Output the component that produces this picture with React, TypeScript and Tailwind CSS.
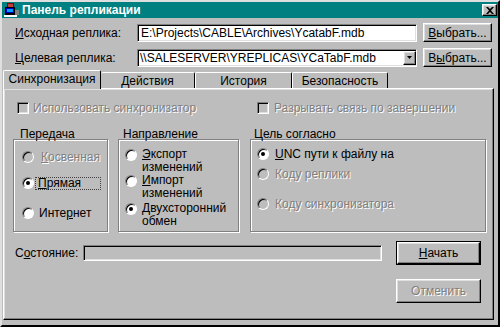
import React from 'react';

const face = 'bg-[#bdbdbd]';
const raised =
  'border border-t-white border-l-white border-r-black border-b-black shadow-[inset_-1px_-1px_#808080,inset_1px_1px_#dfdfdf]';
const sunken =
  'border border-t-[#808080] border-l-[#808080] border-r-white border-b-white shadow-[inset_1px_1px_#000,inset_-1px_-1px_#dfdfdf]';
const grayed = 'text-[#808080] [text-shadow:1px_1px_0_#fff]';
const etched = 'border border-[#808080] shadow-[1px_1px_0_#fff,inset_1px_1px_0_#fff]';

const U = ({ children }: { children: React.ReactNode }) => (
  <span className="underline underline-offset-[1px]">{children}</span>
);

function Radio({ checked = false, disabled = false }: { checked?: boolean; disabled?: boolean }) {
  return (
    <span
      className={`flex w-[12px] h-[12px] shrink-0 rounded-full border border-t-[#808080] border-l-[#808080] border-r-white border-b-white shadow-[inset_1px_1px_#000] ${
        disabled ? face : 'bg-white'
      }`}
    >
      {checked && <span className="m-auto w-[4px] h-[4px] rounded-full bg-black" />}
    </span>
  );
}

function Check() {
  return <span className={`block w-[12px] h-[12px] shrink-0 ${sunken} ${face}`} />;
}

function AppIcon() {
  return (
    <svg width="16" height="14" viewBox="0 0 16 14" className="shrink-0">
      <rect x="3" y="0" width="7" height="6" fill="#800000" />
      <rect x="4" y="1" width="5" height="4" fill="#c04040" />
      <rect x="1" y="4" width="10" height="8" fill="#000" />
      <rect x="2" y="5" width="8" height="5" fill="#0000c0" />
      <rect x="3" y="6" width="6" height="3" fill="#00a0ff" />
      <rect x="0" y="12" width="13" height="2" fill="#fff" />
      <rect x="11" y="7" width="4" height="5" fill="#808080" />
    </svg>
  );
}

export default function App() {
  return (
    <div
      className={`w-[500px] h-[327px] ${face} border-2 border-t-[#dfdfdf] border-l-[#dfdfdf] border-r-black border-b-black text-[12px] text-black font-['Liberation_Sans',Arial,sans-serif] leading-none overflow-hidden`}
    >
      {/* title */}
      <div className="h-[16px] bg-[#008080] flex items-center pl-[2px] pr-[1px]">
        <AppIcon />
        <span className="ml-[2px] text-white font-bold text-[12px]">Панель репликации</span>
        <button className={`ml-auto w-[15px] h-[12px] ${raised} ${face} flex items-center justify-center`}>
          <svg width="8" height="7" viewBox="0 0 8 7">
            <path d="M0 0h2l2 2 2-2h2L5 3.5 8 7H6L4 5 2 7H0l3-3.5z" fill="#000" />
          </svg>
        </button>
      </div>

      {/* source */}
      <div className="mt-[5px] flex items-center h-[19px] pl-[13px]">
        <span className="w-[122px]">
          <U>И</U>сходная реплика:
        </span>
        <div className={`w-[280px] h-[18px] ${sunken} bg-white flex items-center pl-[3px]`}>
          E:\Projects\CABLE\Archives\YcatabF.mdb
        </div>
        <button className={`ml-[6px] w-[69px] h-[19px] ${raised} ${face}`}>
          <U>В</U>ыбрать...
        </button>
      </div>

      {/* target */}
      <div className="mt-[6px] flex items-center h-[19px] pl-[13px]">
        <span className="w-[122px]">
          <U>Ц</U>елевая реплика:
        </span>
        <div className={`w-[280px] h-[18px] ${sunken} bg-white flex items-center pl-[2px]`}>
          <span className="flex-1">\\SALESERVER\YREPLICAS\YCaTabF.mdb</span>
          <span className={`w-[13px] h-[14px] ${raised} ${face} flex items-center justify-center`}>
            <svg width="5" height="3" viewBox="0 0 5 3">
              <path d="M0 0h5L2.5 3z" fill="#000" />
            </svg>
          </span>
        </div>
        <button className={`ml-[6px] w-[69px] h-[19px] ${raised} ${face}`}>
          В<U>ы</U>брать...
        </button>
      </div>

      {/* tabs */}
      <div className="mt-[3px] ml-[1px] h-[18px] flex items-end relative z-10">
        <div className="w-[98px] h-[19px] -mb-[1px] border-t border-l border-r border-t-white border-l-white border-r-black rounded-t-[2px] bg-[#bdbdbd] flex items-center justify-center pb-[2px]">
          Синхронизация
        </div>
        <div className="w-[94px] h-[16px] border-t border-r border-t-white border-r-black rounded-t-[2px] flex items-center justify-center">
          Действия
        </div>
        <div className="w-[97px] h-[16px] border-t border-l border-r border-t-white border-l-white border-r-black rounded-t-[2px] flex items-center justify-center">
          История
        </div>
        <div className="w-[96px] h-[16px] border-t border-l border-r border-t-white border-l-white border-r-black rounded-t-[2px] flex items-center justify-center">
          Безопасность
        </div>
      </div>

      {/* panel */}
      <div className={`ml-[1px] w-[491px] h-[232px] ${raised} pt-[12px]`}>
        <div className="flex h-[13px] items-center pl-[13px]">
          <div className="w-[240px] flex items-center gap-[4px]">
            <Check />
            <span className={grayed}>Использовать синхронизатор</span>
          </div>
          <div className="flex items-center gap-[5px]">
            <Check />
            <span className={grayed}>Разрывать связь по завершении</span>
          </div>
        </div>

        <div className="mt-[14px] flex pl-[9px] gap-[10px]">
          {/* Передача */}
          <div className="w-[95px]">
            <div className="h-[11px] pl-[7px]">Передача</div>
            <div className={`h-[93px] ${etched} pl-[8px] pt-[10px] flex flex-col`}>
              <div className="flex items-center h-[14px] gap-[5px]">
                <Radio disabled />
                <span className={`${grayed} pl-[2px]`}>
                  <U>К</U>освенная
                </span>
              </div>
              <div className="mt-[12px] flex items-center h-[14px] gap-[1px]">
                <Radio checked />
                <span className="w-[66px] h-[13px] border border-dotted border-[#404040] pl-[2px] flex items-center">
                  <U>П</U>рямая
                </span>
              </div>
              <div className="mt-[16px] flex items-center h-[14px] gap-[5px]">
                <Radio />
                <span>
                  Инте<U>р</U>нет
                </span>
              </div>
            </div>
          </div>

          {/* Направление */}
          <div className="w-[121px]">
            <div className="h-[11px] pl-[5px]">Направление</div>
            <div className={`h-[93px] ${etched} pl-[6px] pt-[8px] flex flex-col leading-[13px]`}>
              <div className="flex items-start gap-[5px]">
                <span className="mt-[1px]">
                  <Radio />
                </span>
                <span>
                  <U>Э</U>кспорт
                  <br />
                  изменений
                </span>
              </div>
              <div className="flex items-start gap-[5px]">
                <span className="mt-[1px]">
                  <Radio />
                </span>
                <span>
                  <U>И</U>мпорт
                  <br />
                  изменений
                </span>
              </div>
              <div className="mt-[2px] flex items-start gap-[5px]">
                <span className="mt-[1px]">
                  <Radio checked />
                </span>
                <span>
                  <U>Д</U>вухсторонний
                  <br />
                  обмен
                </span>
              </div>
            </div>
          </div>

          {/* Цель согласно */}
          <div className="w-[236px] ml-[1px]">
            <div className="h-[11px] pl-[4px]">Цель согласно</div>
            <div className={`h-[93px] ${etched} pl-[6px] pt-[7px] flex flex-col`}>
              <div className="flex items-center h-[14px] gap-[6px]">
                <Radio checked />
                <span>
                  <U>U</U>NC пути к файлу на
                </span>
              </div>
              <div className="mt-[6px] flex items-center h-[14px] gap-[6px]">
                <Radio disabled />
                <span className={grayed}>Коду реплики</span>
              </div>
              <div className="mt-[16px] flex items-center h-[14px] gap-[6px]">
                <Radio disabled />
                <span className={grayed}>Коду синхронизатора</span>
              </div>
            </div>
          </div>
        </div>

        {/* status */}
        <div className="mt-[9px] flex items-center h-[24px] pl-[11px]">
          <span className="w-[68px]">
            С<U>о</U>стояние:
          </span>
          <div className={`w-[299px] h-[16px] ${sunken} ${face}`} />
          <button className={`ml-[14px] w-[85px] h-[24px] border border-black ${face} flex`}>
            <span className={`flex-1 ${raised} flex items-center justify-center`}>
              <U>Н</U>ачать
            </span>
          </button>
        </div>

        <button className={`mt-[14px] ml-[392px] w-[85px] h-[24px] ${raised} ${face} ${grayed}`}>
          Отменить
        </button>
      </div>
    </div>
  );
}
